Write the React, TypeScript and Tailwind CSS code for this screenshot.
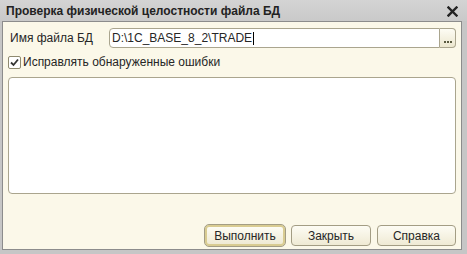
import React from "react";

export default function App() {
  const font = { fontFamily: '"Liberation Sans", Arial, sans-serif' };
  return (
    <div
      className="w-[467px] h-[254px] bg-[#c6c6c6] flex flex-col overflow-hidden text-[#262626]"
      style={font}
    >
      {/* title bar */}
      <div className="h-[21px] flex items-center justify-between pl-[6px] pr-[9px] bg-gradient-to-b from-[#d4d4d4] to-[#c9c9c9]">
        <span className="text-[12px] font-bold text-[#222]">
          Проверка физической целостности файла БД
        </span>
        <svg width="11" height="11" viewBox="0 0 11 11" className="mt-[1px]">
          <path d="M1.5 1.5 L9.5 9.5 M9.5 1.5 L1.5 9.5" stroke="#222" strokeWidth="2.4" strokeLinecap="square" />
        </svg>
      </div>
      {/* content */}
      <div className="flex-1 ml-[2px] mr-[5px] mb-[4px] border border-[#8c8c8c] bg-[#fbf8e9] flex flex-col px-[5px] pt-[6px] pb-[3px]">
        <div className="flex items-center h-[20px]">
          <span className="w-[101px] text-[12px] pl-[2px]">Имя файла БД</span>
          <div className="flex-1 flex h-[20px]">
            <div className="flex-1 bg-white border border-[#aaa58e] rounded-l-[4px] flex items-center pl-[2px] text-[12px]">
              <span>D:\1C_BASE_8_2\TRADE</span>
              <span className="w-[1px] h-[13px] bg-black ml-[1px]" />
            </div>
            <div className="w-[16px] border border-l-0 border-[#aaa58e] rounded-r-[4px] bg-gradient-to-b from-[#fdfcf4] to-[#ece7cf] flex items-end justify-center pb-[4px]">
              <div className="flex gap-[1px]">
                <span className="w-[2px] h-[2px] bg-[#5a5a40]" />
                <span className="w-[2px] h-[2px] bg-[#5a5a40]" />
                <span className="w-[2px] h-[2px] bg-[#5a5a40]" />
              </div>
            </div>
          </div>
        </div>
        <div className="flex items-center mt-[7px] h-[14px]">
          <div className="w-[13px] h-[13px] border border-[#8f8a70] rounded-[2px] bg-white flex items-center justify-center">
            <svg width="9" height="9" viewBox="0 0 9 9">
              <path d="M1 4.5 L3.5 7 L8 1.5" stroke="#333" strokeWidth="1.8" fill="none" />
            </svg>
          </div>
          <span className="text-[12px] ml-[2px]">Исправлять обнаруженные ошибки</span>
        </div>
        <div className="mt-[8px] h-[117px] bg-white border border-[#aaa58e] rounded-[4px]" />
        <div className="flex-1" />
        <div className="flex justify-end gap-[6px]">
          <button className="w-[80px] h-[21px] rounded-[4px] border-2 border-[#d9cc92] outline outline-1 outline-[#a39d84] bg-gradient-to-b from-[#fdfcf4] to-[#efead4] text-[12px] flex items-center justify-center">
            Выполнить
          </button>
          <button className="w-[80px] h-[21px] rounded-[4px] border border-[#a39d84] bg-gradient-to-b from-[#fdfcf4] to-[#efead4] text-[12px] flex items-center justify-center">
            Закрыть
          </button>
          <button className="w-[79px] h-[21px] rounded-[4px] border border-[#a39d84] bg-gradient-to-b from-[#fdfcf4] to-[#efead4] text-[12px] flex items-center justify-center">
            Справка
          </button>
        </div>
      </div>
    </div>
  );
}
